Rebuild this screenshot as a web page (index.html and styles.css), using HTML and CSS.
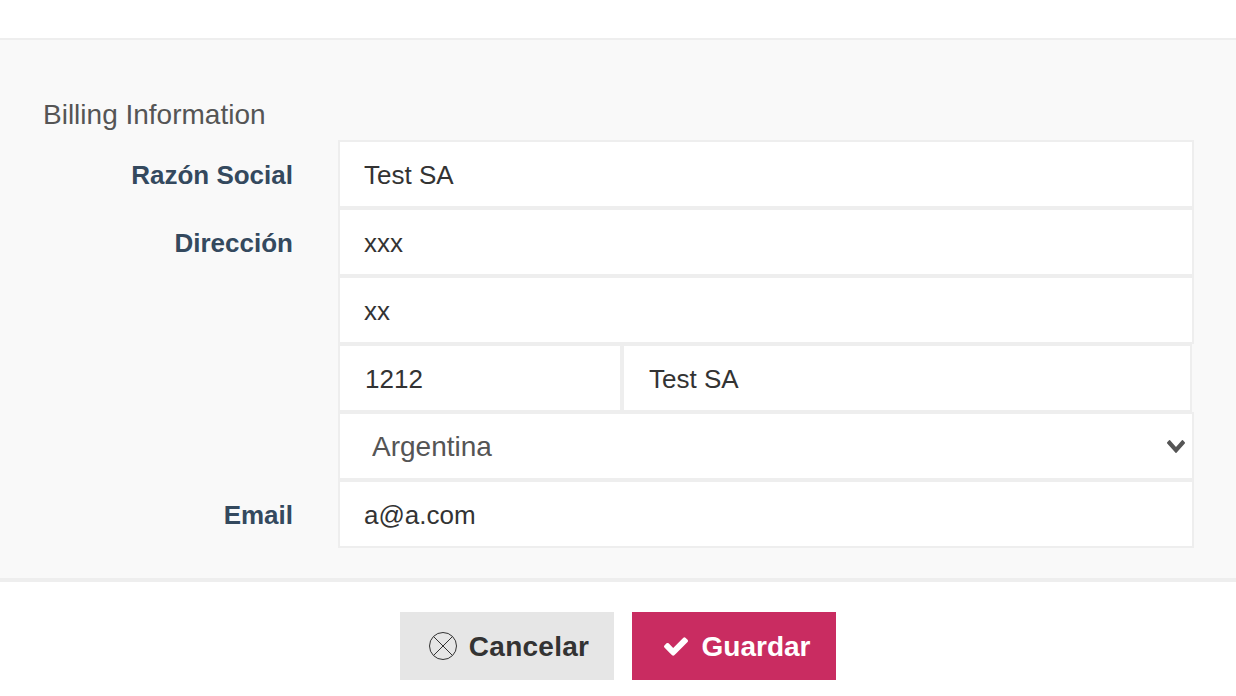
FILE: index.html
```html
<!DOCTYPE html>
<html lang="en">
<head>
    <meta charset="UTF-8">
    <meta name="viewport" content="width=device-width, initial-scale=1.0">
    <title>Billing Information</title>
    <link rel="stylesheet" href="styles.css">
</head>
<body>
    <div class="top-bar"></div>

    <form class="billing-panel">
        <h2 class="panel-title">Billing Information</h2>

        <div class="form-grid">
            <label class="form-label" for="company">Razón Social</label>
            <input class="form-input" id="company" type="text" value="Test SA">

            <label class="form-label" for="address1">Dirección</label>
            <input class="form-input" id="address1" type="text" value="xxx">

            <input class="form-input no-label" id="address2" type="text" value="xx" aria-label="Dirección 2">

            <div class="city-row no-label">
                <input class="form-input" id="zip" type="text" value="1212" aria-label="Código postal">
                <input class="form-input" id="city" type="text" value="Test SA" aria-label="Ciudad">
            </div>

            <div class="select-wrap no-label">
                <select class="form-input form-select" id="country" aria-label="País">
                    <option>Argentina</option>
                </select>
                <svg class="select-arrow" viewBox="90 532 1612 1036" preserveAspectRatio="none" aria-hidden="true">
                    <path d="M1683 808l-742 741q-19 19-45 19t-45-19l-742-741q-19-19-19-45.5t19-45.5l166-165q19-19 45-19t45 19l531 531 531-531q19-19 45-19t45 19l166 165q19 19 19 45.5t-19 45.5z"/>
                </svg>
            </div>

            <label class="form-label" for="email">Email</label>
            <input class="form-input" id="email" type="text" value="a@a.com">
        </div>
    </form>

    <div class="actions">
        <button class="btn btn-cancel" type="button">
            <svg class="icon-cancel" viewBox="0 0 28 28" aria-hidden="true">
                <circle cx="14" cy="14" r="13.5"/>
                <path d="M4.500 4.500l19 19M23.500 4.500l-19 19"/>
            </svg>
            <span class="btn-text">Cancelar</span>
        </button>
        <button class="btn btn-save" type="button">
            <svg class="icon-check" viewBox="121 334 1550 1188" aria-hidden="true">
                <path d="M1671 566q0 40-28 68l-724 724-136 136q-28 28-68 28t-68-28l-136-136-362-362q-28-28-28-68t28-68l136-136q28-28 68-28t68 28l294 295 656-657q28-28 68-28t68 28l136 136q28 28 28 68z"/>
            </svg>
            <span class="btn-text">Guardar</span>
        </button>
    </div>
</body>
</html>
```

FILE: styles.css
```css
* {
    margin: 0;
    padding: 0;
    box-sizing: border-box;
    font-family: "Liberation Sans", Arial, sans-serif;
}

body {
    background-color: white;
    color: #333;
    height: 696px;
    overflow: hidden;
}

.top-bar {
    height: 40px;
    border-bottom: 2px solid #eee;
}

.billing-panel {
    height: 542px;
    padding: 58px 42px 30px 0;
    background-color: #f9f9f9;
    border-bottom: 4px solid #eee;
}

.panel-title {
    height: 42px;
    padding-left: 43px;
    font-size: 28px;
    font-weight: normal;
    line-height: 34px;
    color: #555;
}

.form-grid {
    display: grid;
    grid-template-columns: 338px 856px;
}

.form-label {
    height: 68px;
    padding-right: 45px;
    font-size: 26px;
    font-weight: bold;
    line-height: 70px;
    text-align: right;
    color: #34495e;
}

.no-label {
    grid-column: 2;
}

.form-input {
    display: block;
    width: 100%;
    height: 68px;
    padding: 2px 24px 0;
    background-color: white;
    border: 2px solid #eee;
    border-radius: 0;
    font-size: 26px;
    color: #333;
    outline: none;
}

.city-row {
    display: grid;
    grid-template-columns: 284px 570px;
}

.city-row .form-input {
    padding-left: 25px;
}

.select-wrap {
    position: relative;
}

.form-select {
    padding: 0 24px 0 32px;
    font-size: 28px;
    color: #555;
    appearance: none;
}

.select-arrow {
    position: absolute;
    top: 28px;
    right: 9px;
    width: 18px;
    height: 13px;
    fill: #555;
}

.actions {
    display: flex;
    justify-content: center;
    gap: 18px;
    padding-top: 30px;
}

.btn {
    display: flex;
    align-items: center;
    justify-content: center;
    height: 68px;
    border: none;
    font-size: 28px;
    font-weight: bold;
    cursor: pointer;
}

.btn-text {
    padding-top: 2px;
}

.btn-cancel {
    width: 214px;
    gap: 12px;
    padding-left: 4px;
    background-color: #e6e6e6;
    color: #333;
    letter-spacing: 0.25px;
}

.btn-save {
    width: 204px;
    gap: 14px;
    padding-left: 6px;
    background-color: #c92c61;
    color: white;
}

.icon-cancel {
    width: 28px;
    height: 28px;
    fill: none;
    stroke: #333;
    stroke-width: 1;
}

.icon-check {
    width: 24px;
    height: 19px;
    fill: white;
}
```
